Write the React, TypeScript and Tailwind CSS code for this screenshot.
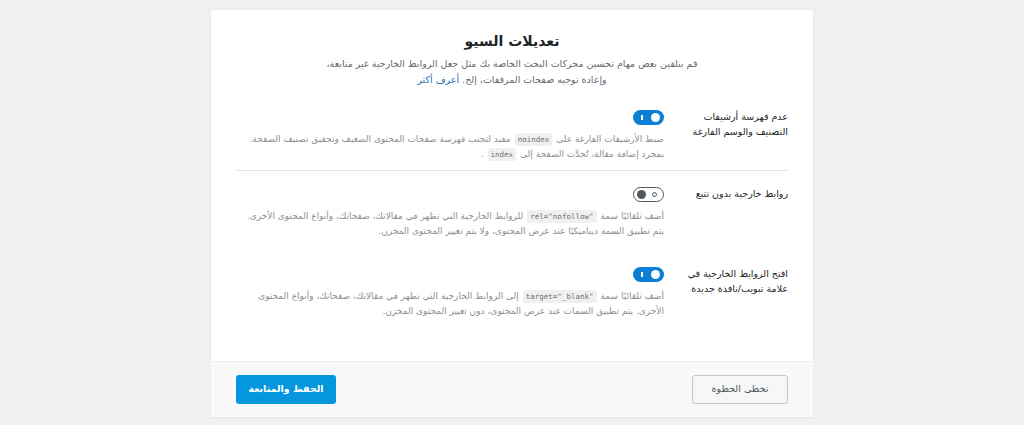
import React from 'react';

const Code = ({ children }: { children: React.ReactNode }) => (
  <code
    dir="ltr"
    className="mx-[4px] inline-block rounded-[2px] bg-[#f0f0f1] px-[3px] text-[7.5px] leading-[13px] text-[#6b6f75] [font-family:'DejaVu_Sans_Mono',monospace]"
  >
    {children}
  </code>
);

const Toggle = ({ on }: { on: boolean }) =>
  on ? (
    <div dir="ltr" className="flex h-[15px] w-[31px] items-center justify-between rounded-full bg-[#0a7fd4] px-[4px]">
      <div className="ml-[4px] h-[5px] w-[1.5px] bg-white" />
      <div className="h-[9px] w-[9px] rounded-full bg-white" />
    </div>
  ) : (
    <div dir="ltr" className="flex h-[15px] w-[31px] items-center justify-between rounded-full border border-[#50575e] bg-white px-[3px]">
      <div className="h-[9px] w-[9px] rounded-full bg-[#50575e]" />
      <div className="mr-[3px] h-[5px] w-[5px] rounded-full border border-[#50575e]" />
    </div>
  );

type Row = { label: React.ReactNode; on: boolean; desc: React.ReactNode; cls: string };

const rows: Row[] = [
  {
    label: 'عدم فهرسة أرشيفات التصنيف والوسم الفارغة',
    on: true,
    cls: 'mb-[14px] border-b border-[#e2e4e7] pb-[8px]',
    desc: (
      <>
        ضبط الأرشيفات الفارغة على<Code>noindex</Code>مفيد لتجنب فهرسة صفحات المحتوى الضعيف وتحقيق تصنيف الصفحة.
        بمجرد إضافة مقالة، تُحدَّث الصفحة إلى<Code>index</Code>.
      </>
    ),
  },
  {
    label: 'روابط خارجية بدون تتبع',
    on: false,
    cls: 'pb-[26px]',
    desc: (
      <>
        أضف تلقائيًا سمة<Code>rel="nofollow"</Code>للروابط الخارجية التي تظهر في مقالاتك، صفحاتك، وأنواع المحتوى الأخرى.
        يتم تطبيق السمة ديناميكيًا عند عرض المحتوى، ولا يتم تغيير المحتوى المخزن.
      </>
    ),
  },
  {
    label: 'افتح الروابط الخارجية في علامة تبويب/نافذة جديدة',
    on: true,
    cls: 'pb-[42px]',
    desc: (
      <>
        أضف تلقائيًا سمة<Code>target="_blank"</Code>إلى الروابط الخارجية التي تظهر في مقالاتك، صفحاتك، وأنواع المحتوى
        الأخرى. يتم تطبيق السمات عند عرض المحتوى، دون تغيير المحتوى المخزن.
      </>
    ),
  },
];

export default function App() {
  return (
    <div dir="rtl" className="min-h-[425px] bg-[#f0f0f1] pt-[10px] [font-family:'DejaVu_Sans',sans-serif]">
      <div className="mx-auto w-[602px] bg-white shadow-[0_1px_2px_rgba(0,0,0,0.06)]">
        <div className="px-[25px] pt-[20px]">
          <div className="text-center">
            <h1 className="text-[14px] font-bold leading-[22px] text-[#1d2327]">تعديلات السيو</h1>
            <p className="mx-auto mt-[4px] w-[380px] text-[9.5px] leading-[16px] text-[#646970]">
              قم بتلقين بعض مهام تحسين محركات البحث الخاصة بك مثل جعل الروابط الخارجية غير متابعة، وإعادة توجيه صفحات المرفقات، إلخ.{' '}
              <a className="text-[#2271b1]">أعرف أكثر</a>
            </p>
          </div>

          <div className="mt-[20px]">
            {rows.map((r, i) => (
              <div key={i} className={`flex gap-[14px] ${r.cls}`}>
                <div className="w-[110px] shrink-0 pt-[1px] text-[9.5px] leading-[15px] text-[#1d2327]">{r.label}</div>
                <div className="flex-1 pt-[2px]">
                  <Toggle on={r.on} />
                  <p className="mt-[7px] text-[9px] leading-[15px] text-[#8c8f94]">{r.desc}</p>
                </div>
              </div>
            ))}
          </div>
        </div>

        <div className="flex items-center justify-between border-t border-[#ececec] bg-[#f9f9f9] px-[25px] py-[13px]">
          <button className="h-[29px] w-[96px] rounded-[3px] border border-[#c3c4c7] bg-[#f6f7f7] text-[9.5px] text-[#50575e]">
            تخطى الخطوة
          </button>
          <button className="h-[29px] w-[100px] rounded-[3px] bg-[#0596de] text-[9.5px] font-bold text-white">
            الحفظ والمتابعة
          </button>
        </div>
      </div>
    </div>
  );
}
